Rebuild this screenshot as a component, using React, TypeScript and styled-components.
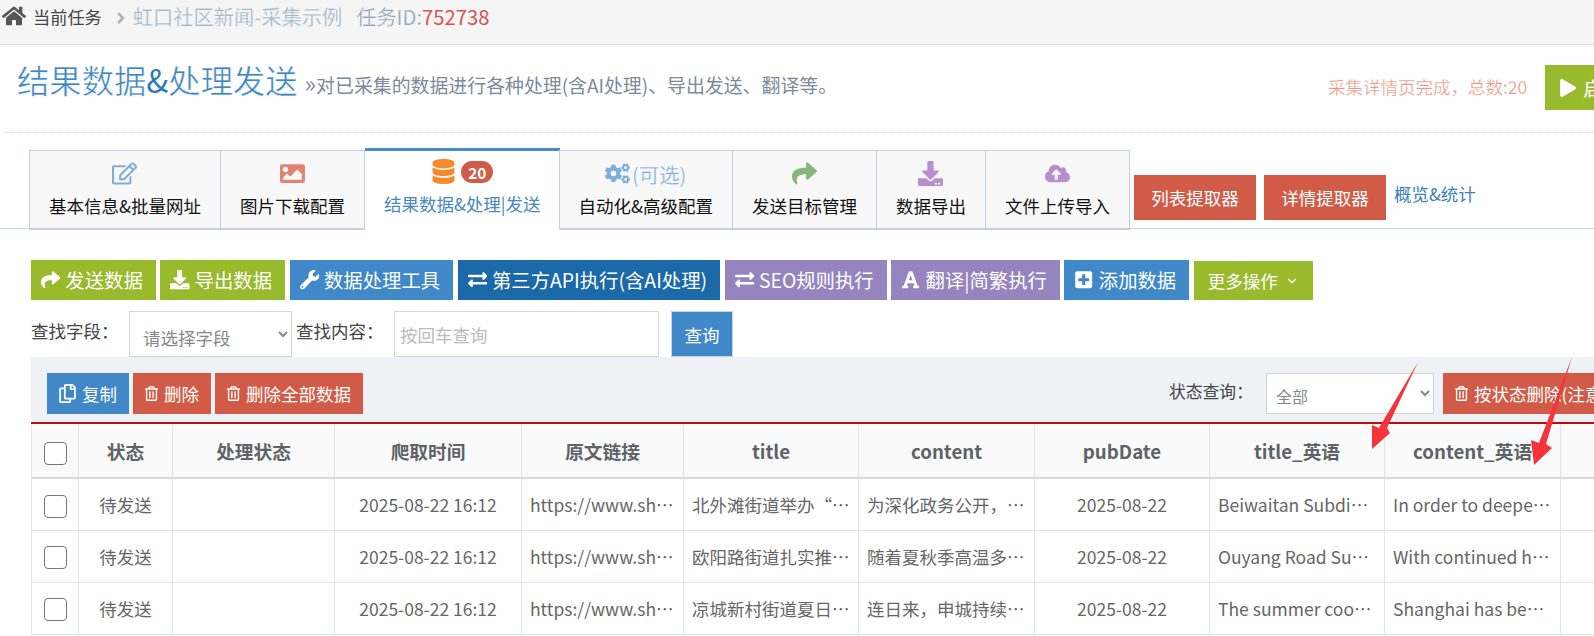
import React from "react";
import styled, { createGlobalStyle } from "styled-components";
import { ChevronDown } from "lucide-react";
import {
  FaHome,
  FaAngleRight,
  FaRegEdit,
  FaImage,
  FaDatabase,
  FaCogs,
  FaShare,
  FaDownload,
  FaCloudUploadAlt,
  FaWrench,
  FaExchangeAlt,
  FaFont,
  FaPlusSquare,
  FaRegTrashAlt,
  FaRegCopy,
  FaPlay,
} from "react-icons/fa";

const tones: Record<string, string> = {
  green: "#9aba2e",
  blue: "#4088c8",
  navy: "#1b69a8",
  purple: "#9584bd",
  red: "#d15b47",
};

const GlobalStyle = createGlobalStyle`
  html, body {
    margin: 0;
    height: 636px;
    overflow: hidden;
    background: #fff;
  }
  * {
    box-sizing: border-box;
  }
`;

const Page = styled.div`
  position: relative;
  width: 1664px;
  height: 636px;
  overflow: hidden;
  font-family: "Noto Sans CJK SC", "Open Sans", sans-serif;
  font-size: 17.5px;
  color: #666;
`;

const TopBar = styled.div`
  display: flex;
  align-items: flex-start;
  height: 45px;
  padding: 0 0 0 2px;
  background: #f5f5f5;
  border-bottom: 1px solid #e4e4e4;
  line-height: 33px;
`;

const Crumb = styled.span`
  margin-left: 7px;
  font-size: 17.2px;
  color: #444;
`;

const HomeIcon = styled(FaHome)`
  width: 24px;
  height: 22px;
  margin-top: 5px;
  color: #555;
`;

const CrumbArrow = styled(FaAngleRight)`
  width: 14px;
  height: 18px;
  margin: 9px 5px 0 12px;
  color: #b4b4b4;
`;

const TaskName = styled.span`
  font-size: 20.24px;
  color: #9db8cf;
  -webkit-text-stroke: 0.25px #f5f5f5;
`;

const TaskId = styled.span`
  margin-left: 14px;
  font-size: 20.24px;
  color: #8ea6bc;
  -webkit-text-stroke: 0.25px #f5f5f5;

  b {
    font-weight: 400;
    color: #d9534f;
    -webkit-text-stroke: 0;
  }
`;

const Header = styled.div`
  display: flex;
  align-items: flex-start;
  height: 88px;
  margin-left: 5px;
  padding: 19px 0 0 12px;
  border-bottom: 1px dotted #d5d5d5;
`;

const TitleGroup = styled.div`
  flex: 1;
  display: flex;
  align-items: baseline;
  line-height: 30px;
`;

const Title = styled.h1`
  margin: 0;
  font-size: 32.34px;
  font-weight: 400;
  color: #3f87c4;
  -webkit-text-stroke: 0.45px #fff;
`;

const Amp = styled.span`
  color: #2b7bbb;
  -webkit-text-stroke: 0;
`;

const Subtitle = styled.span`
  margin-left: 7px;
  font-size: 18.9px;
  color: #7c8a9a;
`;

const Guillemet = styled.span`
  font-size: 24px;
  line-height: 1;
`;

const RunGroup = styled.div`
  display: flex;
  align-items: center;
  flex-shrink: 0;
  gap: 18px;
  width: 336px;
  margin-top: 1px;
`;

const RunStatus = styled.span`
  flex-shrink: 0;
  margin-bottom: 3px;
  white-space: nowrap;
  color: #e79a88;
  -webkit-text-stroke: 0.25px #fff;
`;

const RunButton = styled.div`
  display: flex;
  align-items: center;
  flex-shrink: 0;
  gap: 6px;
  height: 45px;
  padding: 0 14px;
  background: ${tones.green};
  color: #fff;
  font-size: 19.4px;
  white-space: nowrap;
`;

const TabsRow = styled.div`
  display: flex;
  align-items: flex-end;
  height: 79px;
  margin-top: 17px;
  padding-left: 30px;
  border-bottom: 1px solid #c8d2e0;
`;

const Tabs = styled.div`
  display: flex;
  align-self: flex-start;
  height: 79px;
`;

const Tab = styled.div<{ $active?: boolean }>`
  display: flex;
  flex-direction: column;
  align-items: center;
  padding: ${(p) => (p.$active ? "8px" : "10px")} 19px 0;
  background: ${(p) => (p.$active ? "#fff" : "#f8f8f8")};
  border: 1px solid #c5d0df;
  border-left-width: ${(p) => (p.$active ? "0" : "1px")};
  border-right-width: ${(p) => (p.$active ? "0" : "1px")};
  border-bottom: 2px solid ${(p) => (p.$active ? "#fff" : "#c5d0df")};
  border-top: ${(p) => (p.$active ? "3px solid #4a8cc2" : "1px solid #c5d0df")};
  margin-top: ${(p) => (p.$active ? "-2px" : "0")};
  margin-left: ${(p) => (p.$active ? "0" : "-1px")};
  height: ${(p) => (p.$active ? "82px" : "80px")};
  color: ${(p) => (p.$active ? "#4a88bd" : "#111")};
  white-space: nowrap;
`;

const TabIcon = styled.div<{ $color: string }>`
  display: flex;
  align-items: center;
  gap: 5px;
  height: 25px;
  color: ${(p) => p.$color};
  font-size: 25px;
`;

const Optional = styled.span`
  margin-left: -3px;
  font-size: 20.3px;
  -webkit-text-stroke: 0.25px #f8f8f8;
`;

const TabBadge = styled.span`
  display: inline-flex;
  align-items: center;
  justify-content: center;
  width: 32px;
  height: 22px;
  border-radius: 11px;
  background: #cf5c48;
  color: #fff;
  font-size: 15.4px;
  font-weight: 700;
`;

const TabLabel = styled.div`
  margin-top: 7px;
  line-height: 26px;
`;

const ExtractButton = styled.div`
  display: flex;
  align-items: center;
  justify-content: center;
  align-self: flex-start;
  width: 122px;
  height: 45px;
  margin: 25px 0 0 4px;
  background: ${tones.red};
  color: #fff;

  & + & {
    margin-left: 8px;
  }
`;

const OverviewLink = styled.a`
  align-self: flex-start;
  margin: 31px 0 0 8px;
  line-height: 26px;
  color: #3a80bb;
`;

const ActionRow = styled.div`
  display: flex;
  align-items: flex-end;
  gap: 4.5px;
  height: 40px;
  margin: 31px 0 0 31px;
`;

const ActionButton = styled.div<{ $tone: string; $small?: boolean }>`
  display: flex;
  align-items: center;
  gap: 5px;
  flex-shrink: 0;
  height: ${(p) => (p.$small ? "41px" : "40px")};
  padding: ${(p) => (p.$small ? "0 12px 0 11px" : "0 13px 0 10px")};
  background: ${(p) => tones[p.$tone]};
  color: #fff;
  font-size: ${(p) => (p.$small ? "17.5px" : "19.36px")};
  white-space: nowrap;
`;

const MoreButton = styled(ActionButton)`
  height: 39px;
  padding: 0 14px;
  gap: 7px;
`;

const SearchRow = styled.div`
  display: flex;
  height: 46px;
  margin: 11px 0 0 31px;
`;

const FieldLabel = styled.label`
  width: 98px;
  line-height: 40px;
  color: #444;
  white-space: nowrap;
`;

const SearchSelect = styled.select`
  width: 163px;
  height: 46px;
  margin-right: 4px;
  padding: 6px 0 0 9px;
  border: 1px solid #d5d5d5;
  background: #fff;
  font-family: inherit;
  font-size: 17.5px;
  color: #888;
  outline: none;
`;

const SearchInput = styled.input`
  width: 265px;
  height: 46px;
  padding: 0 5px;
  border: 1px solid #d5d5d5;
  font-family: inherit;
  font-size: 17.5px;
  outline: none;

  &::placeholder {
    color: #bbb;
  }
`;

const QueryButton = styled.div`
  display: flex;
  align-items: center;
  justify-content: center;
  width: 62px;
  margin-left: 12px;
  background: ${tones.blue};
  border: 1px solid #c9d3df;
  color: #fff;
`;

const Panel = styled.div`
  display: flex;
  align-items: flex-start;
  height: 65px;
  margin-left: 31px;
  padding: 16px 0 0 16px;
  background: #eef1f6;
`;

const PanelLeft = styled.div`
  flex: 1;
  display: flex;
  gap: 4px;
`;

const PanelRight = styled.div`
  display: flex;
  align-items: flex-start;
  width: 495px;
`;

const StatusLabel = styled.label`
  width: 97px;
  line-height: 36px;
  font-size: 16.8px;
  color: #444;
`;

const StatusSelect = styled.select`
  width: 168px;
  height: 41px;
  margin-right: 9px;
  padding: 5px 0 0 5px;
  border: 1px solid #d5d5d5;
  background: #fff;
  font-family: inherit;
  font-size: 16px;
  color: #888;
  outline: none;
`;

const DataTable = styled.table`
  width: 1633px;
  margin-left: 31px;
  border-collapse: collapse;
  table-layout: fixed;
  border-top: 2px solid #b80d0d;
`;

const HeadCell = styled.th`
  height: 55px;
  padding: 0 8px;
  background: #fafafa;
  border: 1px solid #e1e4ea;
  border-top: 0;
  border-bottom: 2px solid #d8d8d8;
  font-size: 18.7px;
  font-weight: 700;
  color: #5f6368;
  text-align: center;
`;

const Cell = styled.td<{ $left?: boolean; $tight?: boolean }>`
  height: 52px;
  padding: 0 ${(p) => (p.$tight ? "10px" : "8px")} 0 8px;
  border: 1px solid #e1e4ea;
  color: #666;
  text-align: ${(p) => (p.$left ? "left" : "center")};
  white-space: nowrap;
  overflow: hidden;
  text-overflow: ellipsis;
`;

const CheckMark = styled.span`
  display: inline-block;
  width: 23px;
  height: 23px;
  vertical-align: middle;
  border: 1px solid #777;
  border-radius: 4px;
  background: #fff;
`;

const ArrowLayer = styled.svg`
  position: absolute;
  top: 0;
  left: 0;
  width: 1594px;
  height: 636px;
  pointer-events: none;
`;

const tabs = [
  { label: "基本信息&批量网址", color: "#7eaedb", icon: <FaRegEdit /> },
  { label: "图片下载配置", color: "#e58372", icon: <FaImage /> },
  {
    label: "结果数据&处理|发送",
    color: "#f58a2c",
    active: true,
    icon: (
      <>
        <FaDatabase />
        <TabBadge>20</TabBadge>
      </>
    ),
  },
  {
    label: "自动化&高级配置",
    color: "#7eaedb",
    icon: (
      <>
        <FaCogs />
        <Optional>(可选)</Optional>
      </>
    ),
  },
  { label: "发送目标管理", color: "#85b878", icon: <FaShare /> },
  { label: "数据导出", color: "#b78fd0", icon: <FaDownload /> },
  { label: "文件上传导入", color: "#b78fd0", icon: <FaCloudUploadAlt /> },
];

const actions = [
  { tone: "green", icon: <FaShare />, label: "发送数据" },
  { tone: "green", icon: <FaDownload />, label: "导出数据" },
  { tone: "blue", icon: <FaWrench />, label: "数据处理工具" },
  { tone: "navy", icon: <FaExchangeAlt />, label: "第三方API执行(含AI处理)" },
  { tone: "purple", icon: <FaExchangeAlt />, label: "SEO规则执行" },
  { tone: "purple", icon: <FaFont />, label: "翻译|简繁执行" },
  { tone: "blue", icon: <FaPlusSquare />, label: "添加数据" },
];

const columns = [
  { label: "", width: 47 },
  { label: "状态", width: 94 },
  { label: "处理状态", width: 162 },
  { label: "爬取时间", width: 187 },
  { label: "原文链接", width: 162 },
  { label: "title", width: 175 },
  { label: "content", width: 176 },
  { label: "pubDate", width: 175 },
  { label: "title_英语", width: 175 },
  { label: "content_英语", width: 176 },
  { label: "", width: 104 },
];

const rows = [
  [
    "北外滩街道举办“清凉一夏”活动",
    "为深化政务公开，进一步提升服务",
    "Beiwaitan Subdistrict held an event",
    "In order to deepen the openness",
  ],
  [
    "欧阳路街道扎实推进防暑降温工作",
    "随着夏秋季高温多雨天气的到来",
    "Ouyang Road Subdistrict promotes",
    "With continued high temperatures",
  ],
  [
    "凉城新村街道夏日送清凉活动开展",
    "连日来，申城持续高温天气，街道",
    "The summer cool campaign in Liangcheng",
    "Shanghai has been hit by heat",
  ],
];

const App: React.FC = () => {
  return (
    <Page>
      <GlobalStyle />
      <TopBar>
        <HomeIcon />
        <Crumb>当前任务</Crumb>
        <CrumbArrow />
        <TaskName>虹口社区新闻-采集示例</TaskName>
        <TaskId>
          任务ID:<b>752738</b>
        </TaskId>
      </TopBar>

      <Header>
        <TitleGroup>
          <Title>
            结果数据<Amp>&amp;</Amp>处理发送
          </Title>
          <Subtitle>
            <Guillemet>»</Guillemet>对已采集的数据进行各种处理(含AI处理)、导出发送、翻译等。
          </Subtitle>
        </TitleGroup>
        <RunGroup>
          <RunStatus>采集详情页完成，总数:20</RunStatus>
          <RunButton>
            <FaPlay size={18} />
            启动采集
          </RunButton>
        </RunGroup>
      </Header>

      <TabsRow>
        <Tabs>
          {tabs.map((tab) => (
            <Tab key={tab.label} $active={tab.active}>
              <TabIcon $color={tab.color}>{tab.icon}</TabIcon>
              <TabLabel>{tab.label}</TabLabel>
            </Tab>
          ))}
        </Tabs>
        <ExtractButton>列表提取器</ExtractButton>
        <ExtractButton>详情提取器</ExtractButton>
        <OverviewLink>概览&amp;统计</OverviewLink>
      </TabsRow>

      <ActionRow>
        {actions.map((action) => (
          <ActionButton key={action.label} $tone={action.tone}>
            {action.icon}
            {action.label}
          </ActionButton>
        ))}
        <MoreButton $tone="green" $small>
          更多操作
          <ChevronDown size={14} strokeWidth={2} />
        </MoreButton>
      </ActionRow>

      <SearchRow>
        <FieldLabel>查找字段：</FieldLabel>
        <SearchSelect defaultValue="">
          <option value="">请选择字段</option>
        </SearchSelect>
        <FieldLabel>查找内容：</FieldLabel>
        <SearchInput placeholder="按回车查询" readOnly />
        <QueryButton>查询</QueryButton>
      </SearchRow>

      <Panel>
        <PanelLeft>
          <ActionButton $tone="blue" $small>
            <FaRegCopy size={19} />
            复制
          </ActionButton>
          <ActionButton $tone="red" $small>
            <FaRegTrashAlt size={15} />
            删除
          </ActionButton>
          <ActionButton $tone="red" $small>
            <FaRegTrashAlt size={15} />
            删除全部数据
          </ActionButton>
        </PanelLeft>
        <PanelRight>
          <StatusLabel>状态查询：</StatusLabel>
          <StatusSelect defaultValue="">
            <option value="">全部</option>
          </StatusSelect>
          <ActionButton $tone="red" $small>
            <FaRegTrashAlt size={15} />
            按状态删除(注意)
          </ActionButton>
        </PanelRight>
      </Panel>

      <DataTable>
        <colgroup>
          {columns.map((column, i) => (
            <col key={i} width={column.width} />
          ))}
        </colgroup>
        <thead>
          <tr>
            {columns.map((column, i) => (
              <HeadCell key={i}>{i === 0 ? <CheckMark /> : column.label}</HeadCell>
            ))}
          </tr>
        </thead>
        <tbody>
          {rows.map((row) => (
            <tr key={row[0]}>
              <Cell>
                <CheckMark />
              </Cell>
              <Cell>待发送</Cell>
              <Cell />
              <Cell>2025-08-22 16:12</Cell>
              <Cell $left>https://www.shhk.gov.cn/news</Cell>
              <Cell $left>{row[0]}</Cell>
              <Cell $left>{row[1]}</Cell>
              <Cell>2025-08-22</Cell>
              <Cell $left $tight>
                {row[2]}
              </Cell>
              <Cell $left>{row[3]}</Cell>
              <Cell />
            </tr>
          ))}
        </tbody>
      </DataTable>

      <ArrowLayer viewBox="0 0 1594 636">
        <polygon points="1418,362 1387,428 1390,433 1372,449 1372,425 1379,428" fill="#f5333a" />
        <polygon points="1572,357 1546,444 1552,448 1534,465 1531,440 1539,443" fill="#f5333a" />
      </ArrowLayer>
    </Page>
  );
};

export default App;
